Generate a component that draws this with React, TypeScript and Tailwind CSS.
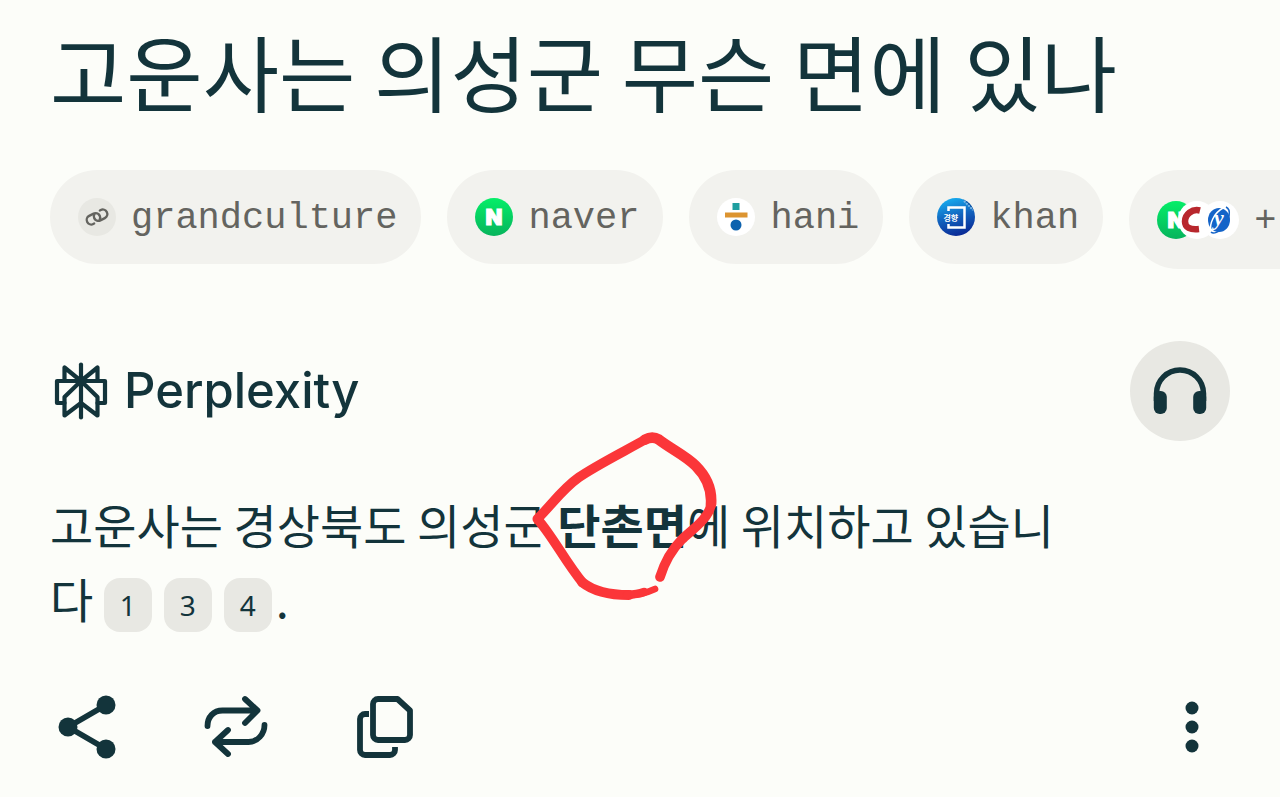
import type { ReactNode } from 'react'

interface Source {
  name: string
  icon: ReactNode
}

const LinkIcon = () => (
  <svg viewBox="0 0 38 38" className="size-full" aria-hidden="true">
    <circle cx="19" cy="19" r="19" fill="#e8e8e3" />
    <g fill="none" stroke="#64645f" strokeWidth="2.4" strokeLinecap="round" transform="rotate(-27 19 19)">
      <path d="M13.500 23.500h-1a4.500 4.500 0 0 1 0-9h5a4.500 4.500 0 0 1 4.500 4.500 4.500 4.500 0 0 1-2 3.800" />
      <path d="M24.500 14.500h1a4.500 4.500 0 0 1 0 9h-5a4.500 4.500 0 0 1-4.500-4.500 4.500 4.500 0 0 1 2-3.800" />
    </g>
  </svg>
)

const NaverIcon = () => (
  <svg viewBox="0 0 38 38" className="size-full" aria-hidden="true">
    <defs>
      <linearGradient id="naver" x1="0" y1="0" x2="0" y2="1">
        <stop offset="0" stopColor="#05ee68" />
        <stop offset="1" stopColor="#07b45c" />
      </linearGradient>
    </defs>
    <circle cx="19" cy="19" r="19" fill="url(#naver)" />
    <text x="19" y="27" textAnchor="middle" fill="#fff" stroke="#fff" className="font-['Inter'] text-[22px] font-black">N</text>
  </svg>
)

const HaniIcon = () => (
  <svg viewBox="0 0 38 38" className="size-full" aria-hidden="true">
    <circle cx="19" cy="19" r="19" fill="#fff" />
    <rect x="15.500" y="5" width="7" height="7" fill="#1f9fa0" />
    <rect x="8" y="14.500" width="22.500" height="5" fill="#dc9430" />
    <circle cx="19" cy="27" r="5.500" fill="#0d62ae" />
  </svg>
)

const KhanIcon = () => (
  <svg viewBox="0 0 38 38" className="size-full" aria-hidden="true">
    <defs>
      <linearGradient id="khan" x1="0.300" y1="0" x2="0.600" y2="1">
        <stop offset="0" stopColor="#16aef0" />
        <stop offset="0.500" stopColor="#1262bd" />
        <stop offset="1" stopColor="#0a2894" />
      </linearGradient>
      <clipPath id="khanClip">
        <circle cx="19" cy="19" r="19" />
      </clipPath>
    </defs>
    <g clipPath="url(#khanClip)">
      <rect width="38" height="38" fill="url(#khan)" />
      <path d="M25 0L38 13V0z" fill="#0b4a9c" />
      <path d="M27 3l9 9" stroke="#78b6e6" strokeWidth="2" strokeDasharray="2 1" />
      <path d="M11.500 13V9.500h16v20h-16V26" fill="none" stroke="#fff" strokeWidth="2.500" />
      <text x="6.500" y="23" fill="#fff" className="font-['Noto_Sans_CJK_KR'] text-[8px] font-bold">경향</text>
    </g>
  </svg>
)

const MoreSourcesIcon = () => (
  <svg viewBox="0 0 82 38" className="h-[38px] w-[82px] shrink-0" aria-hidden="true">
    <circle cx="19" cy="19" r="19" fill="url(#naver)" />
    <text x="19" y="27" textAnchor="middle" fill="#fff" stroke="#fff" className="font-['Inter'] text-[22px] font-black">N</text>
    <circle cx="40" cy="19" r="19" fill="#fff" />
    <path d="M43 9.500c-8-2-15 4-15 11 0 6 5 8.500 14 7.500" fill="none" stroke="#b8272d" strokeWidth="6.500" />
    <circle cx="63" cy="19" r="19" fill="#fff" />
    <ellipse cx="62" cy="19" rx="11" ry="12" fill="#1464c8" />
    <path d="M69 6c6 3 3 13-2 19-5 7-11 8-13 6" fill="none" stroke="#1464c8" strokeWidth="1.500" />
    <path d="M54 30c-2-7 3-18 12-23" fill="none" stroke="#fff" strokeWidth="1.500" />
    <text x="62" y="24" textAnchor="middle" fill="#fff" className="font-['Liberation_Serif'] text-[22px] font-bold italic">y</text>
  </svg>
)

const PerplexityLogo = () => (
  <svg viewBox="0 0 54 58" className="h-[58px] w-[54px]" fill="none" stroke="currentColor" strokeWidth="4.2" strokeLinecap="round" strokeLinejoin="round" aria-hidden="true">
    <path d="M27 2.500v53" />
    <path d="M27 19L10.500 5.500V19M27 19L43.500 5.500V19" />
    <path d="M10.500 41H3V19h48v22h-7.500" />
    <path d="M27 19L10.500 35v18.500L27 41M27 19l16.500 16v18.500L27 41" />
    <circle cx="27" cy="19" r="3" fill="currentColor" />
  </svg>
)

const HeadphonesIcon = () => (
  <svg viewBox="0 0 54 48" className="h-12 w-[54px]" aria-hidden="true">
    <path d="M3.500 34v-7.500a23.500 23.500 0 0 1 47 0V34" fill="none" stroke="currentColor" strokeWidth="5.500" />
    <rect x="0.800" y="24" width="13" height="23" rx="6" fill="currentColor" />
    <rect x="40.200" y="24" width="13" height="23" rx="6" fill="currentColor" />
  </svg>
)

const ShareIcon = () => (
  <svg viewBox="0 0 64 64" className="size-16" aria-hidden="true">
    <path d="M52 10L14 32l38 22" fill="none" stroke="currentColor" strokeWidth="5.500" />
    <circle cx="14" cy="32" r="9.500" fill="currentColor" />
    <circle cx="52" cy="10" r="9.500" fill="currentColor" />
    <circle cx="52" cy="54" r="9.500" fill="currentColor" />
  </svg>
)

const RewriteIcon = () => (
  <svg viewBox="0 0 64 64" className="size-16" fill="none" stroke="currentColor" strokeWidth="5.800" strokeLinecap="round" strokeLinejoin="round" aria-hidden="true">
    <path d="M3.500 31c0-9 6-15.500 15-15.500H53M41 4l12.500 11.500L41 28" />
    <path d="M60.500 30c0 9-7 17-16 17H11M24 35L11 47l13 12" />
  </svg>
)

const CopyIcon = () => (
  <svg viewBox="0 0 64 64" className="size-16" fill="none" stroke="currentColor" strokeWidth="5.800" strokeLinejoin="round" aria-hidden="true">
    <path d="M24 4h19.500L56 15.500V40a5 5 0 0 1-5 5H24a5 5 0 0 1-5-5V9a5 5 0 0 1 5-5z" />
    <path d="M15 19h-4a5 5 0 0 0-5 5v31a5 5 0 0 0 5 5h25a5 5 0 0 0 5-5v-3" />
  </svg>
)

const MoreIcon = () => (
  <svg viewBox="0 0 16 64" className="h-16 w-4" fill="currentColor" aria-hidden="true">
    <circle cx="8" cy="13" r="6.500" />
    <circle cx="8" cy="32" r="6.500" />
    <circle cx="8" cy="51" r="6.500" />
  </svg>
)

// hand-drawn marker loop round the highlighted word
const MarkerLoop = () => (
  <svg viewBox="0 0 780 600" className="pointer-events-none absolute -top-[70px] -left-[58px] h-[200px] w-[260px] max-w-none" fill="none" stroke="#fb3639" strokeLinecap="round" strokeLinejoin="round" aria-hidden="true">
    <path d="M483 474C500 420 520 390 548 362S630 300 636 256" strokeWidth="29" />
    <path d="M636 256C640 205 620 170 590 140S520 92 480 62Q460 50 438 62" strokeWidth="32" />
    <path d="M438 62C380 95 290 140 240 175S160 255 115 300C160 350 200 430 250 490" strokeWidth="29" />
    <path d="M250 490C285 518 340 528 390 528" strokeWidth="30" />
    <path d="M380 530Q430 528 468 510" strokeWidth="20" />
    <path d="M386 527Q415 526 435 519" strokeWidth="26" />
  </svg>
)

const sources: Source[] = [
  { name: 'grandculture', icon: <LinkIcon /> },
  { name: 'naver', icon: <NaverIcon /> },
  { name: 'hani', icon: <HaniIcon /> },
  { name: 'khan', icon: <KhanIcon /> },
]

const citations = [1, 3, 4]

const App = () => {
  return (
    <main className="min-h-screen overflow-hidden bg-[#fcfdf9] pb-9 font-['Noto_Sans_CJK_KR',sans-serif] text-[#13343b]">
      <h1 className="px-[50px] pt-5 text-[83px] leading-[100px]">고운사는 의성군 무슨 면에 있나</h1>

      {/* Sources */}
      <nav aria-label="Sources" className="mt-[50px] flex items-start gap-[26px] overflow-hidden pl-[50px] font-['Liberation_Mono',monospace] text-[37px] text-[#64645f]">
        {sources.map((source) => (
          <a key={source.name} href="#" className="flex h-[94px] shrink-0 items-center gap-[15px] rounded-full bg-[#f2f2ee] pr-6 pl-7">
            <span className="size-[38px]">{source.icon}</span>
            <span className="pt-1">{source.name}</span>
          </a>
        ))}
        <button type="button" aria-label="More sources" className="flex h-[99px] shrink-0 items-center gap-[15px] rounded-full bg-[#f2f2ee] pr-16 pl-7">
          <MoreSourcesIcon />
          <span className="pt-1">+</span>
        </button>
      </nav>

      <section className="px-[50px]">
        <header className="mt-[72px] flex items-center justify-between">
          <h2 className="flex items-center gap-4 pl-1 font-['Inter',sans-serif] text-[49px] font-medium">
            <PerplexityLogo />
            Perplexity
          </h2>
          <button type="button" aria-label="Listen" className="flex size-[100px] items-center justify-center rounded-full bg-[#e8e8e3]">
            <HeadphonesIcon />
          </button>
        </header>

        <p className="mt-[46px] max-w-[1020px] text-[47px] leading-[74px]">
          고운사는 경상북도 의성군{' '}
          <strong className="relative font-bold">
            단촌면
            <MarkerLoop />
          </strong>
          에 위치하고 있습니
          <wbr />
          다{' '}
          <span className="mr-1 inline-flex gap-3 align-middle">
            {citations.map((n) => (
              <a key={n} href="#" className="flex h-[54px] w-12 items-center justify-center rounded-2xl bg-[#e8e8e3] font-['Noto_Sans',sans-serif] text-[28px]">
                {n}
              </a>
            ))}
          </span>
          .
        </p>

        {/* Actions */}
        <footer className="mt-[60px] flex items-center justify-between">
          <div className="flex gap-[86px] pl-1">
            <button type="button" aria-label="Share"><ShareIcon /></button>
            <button type="button" aria-label="Rewrite"><RewriteIcon /></button>
            <button type="button" aria-label="Copy"><CopyIcon /></button>
          </div>
          <button type="button" aria-label="More" className="pr-[30px]"><MoreIcon /></button>
        </footer>
      </section>
    </main>
  )
}

export default App
